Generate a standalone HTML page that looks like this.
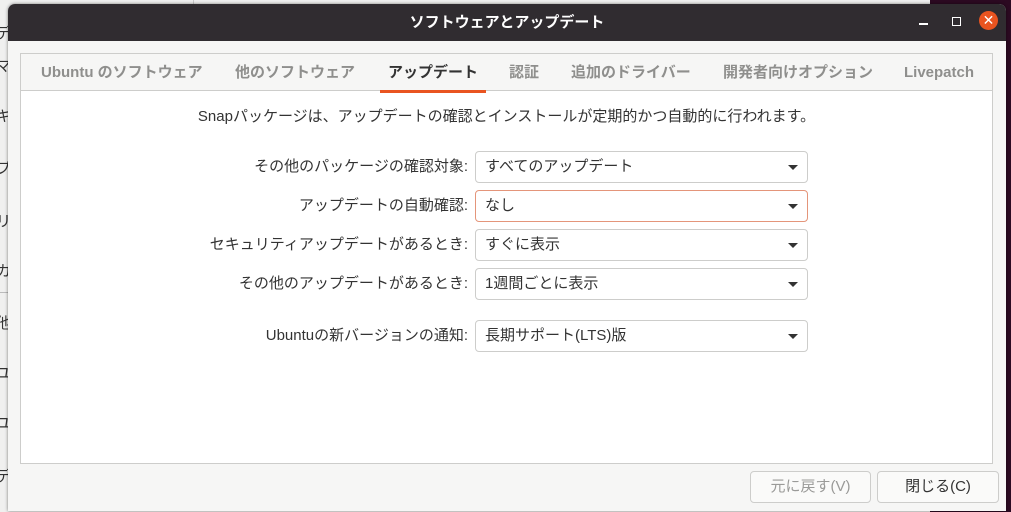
<!DOCTYPE html>
<html><head><meta charset="utf-8"><style>
*{margin:0;padding:0;box-sizing:border-box}
body{width:1011px;height:512px;overflow:hidden;position:relative;background:#2c0a22;font-family:"Liberation Sans","Noto Sans CJK JP",sans-serif;}
.bgwin{position:absolute;left:0;top:0;width:930px;height:512px;background:#f0f0ef;}
.bgwin span{position:absolute;left:-4px;font-size:15px;color:#333}
.win{position:absolute;left:8px;top:4px;width:998px;height:507px;background:#f6f6f5;border-radius:7px 7px 0 0;overflow:hidden;box-shadow:0 0 3px rgba(0,0,0,.5)}
.title{height:37px;background:#302c30;color:#fff;font-weight:bold;font-size:15px;text-align:center;line-height:37px;}
.nb{position:absolute;left:12px;top:49px;width:973px;height:411px;border:1px solid #cdcdcb;background:#fff}
.tabs{height:37px;background:#f6f6f5;border-bottom:1px solid #cdcdcb;position:relative}
.tab{position:absolute;top:0;line-height:38px;font-size:15px;font-weight:bold;color:#8f8f8d}
.tab.a{color:#333}
.tab.a:after{content:"";position:absolute;left:-8px;right:-8px;bottom:-1px;height:3px;background:#e95420}
.note{position:absolute;top:51px;width:100%;text-align:center;font-size:15px;color:#333}
.lbl{position:absolute;right:524px;font-size:15px;color:#333;line-height:31px}
.dd{position:absolute;left:454px;width:333px;height:32px;border:1px solid #cdcdcb;border-radius:4px;background:#fff;font-size:15px;color:#333;line-height:30px;padding-left:9px}
.dd:after{content:"";position:absolute;right:9px;top:13px;border-left:5px solid transparent;border-right:5px solid transparent;border-top:5px solid #333}
.dd.f{border-color:#e4957a}
.btn{position:absolute;top:467px;height:32px;border:1px solid #cdcdcb;border-radius:4px;background:#fafaf9;font-size:15px;line-height:30px;text-align:center;color:#333}
</style></head><body>
<div class="bgwin">
<span style="top:22px">デ</span><span style="top:55px">マ</span><span style="top:105px">キ</span><span style="top:157px">プ</span><span style="top:210px">リ</span><span style="top:260px">カ</span><span style="top:312px">他</span><span style="top:362px">ユ</span><span style="top:412px">ユ</span><span style="top:465px">デ</span>
<div style="position:absolute;left:0;top:292px;width:8px;border-top:1px solid #bbb"></div>
<div style="position:absolute;left:193px;top:0;height:4px;border-left:1px solid #ccc"></div>
</div>
<div class="win">
<div class="title">ソフトウェアとアップデート</div>
<div style="position:absolute;right:78px;top:19px;width:9px;border-top:2px solid #fff"></div>
<div style="position:absolute;right:45px;top:13px;width:9px;height:9px;border:1.5px solid #fff"></div>
<div style="position:absolute;right:8px;top:7px;width:19px;height:19px;border-radius:50%;background:#e95420;color:#fff;font-size:14px;text-align:center;line-height:19px">✕</div>
<div class="nb">
<div class="tabs">
<div class="tab" style="left:20px">Ubuntu のソフトウェア</div>
<div class="tab" style="left:214px">他のソフトウェア</div>
<div class="tab a" style="left:367px">アップデート</div>
<div class="tab" style="left:488px">認証</div>
<div class="tab" style="left:550px">追加のドライバー</div>
<div class="tab" style="left:702px">開発者向けオプション</div>
<div class="tab" style="left:883px">Livepatch</div>
</div>
<div class="note">Snapパッケージは、アップデートの確認とインストールが定期的かつ自動的に行われます。</div>
<div class="lbl" style="top:97px">その他のパッケージの確認対象:</div>
<div class="dd" style="top:97px">すべてのアップデート</div>
<div class="lbl" style="top:136px">アップデートの自動確認:</div>
<div class="dd f" style="top:136px">なし</div>
<div class="lbl" style="top:175px">セキュリティアップデートがあるとき:</div>
<div class="dd" style="top:175px">すぐに表示</div>
<div class="lbl" style="top:214px">その他のアップデートがあるとき:</div>
<div class="dd" style="top:214px">1週間ごとに表示</div>
<div class="lbl" style="top:266px">Ubuntuの新バージョンの通知:</div>
<div class="dd" style="top:266px">長期サポート(LTS)版</div>
</div>
<div class="btn" style="left:742px;width:121px;color:#9a9a98">元に戻す(V)</div>
<div class="btn" style="left:869px;width:122px">閉じる(C)</div>
</div>
</body></html>
